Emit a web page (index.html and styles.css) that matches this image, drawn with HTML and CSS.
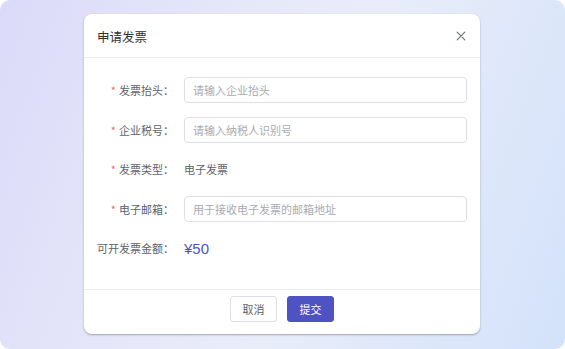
FILE: index.html
```html
<!DOCTYPE html>
<html lang="zh-CN">
<head>
<meta charset="utf-8">
<title>申请发票</title>
<link rel="stylesheet" href="styles.css">
</head>
<body>
<div class="page">
  <div class="dialog">
    <div class="dialog-header">
      <span class="dialog-title">申请发票</span>
      <span class="close" aria-label="关闭">
        <svg width="10" height="10" viewBox="0 0 10 10"><path d="M1.2 1.2 L8.8 8.8 M8.8 1.2 L1.2 8.8" stroke="#6b6f78" stroke-width="1.1" fill="none" stroke-linecap="round"/></svg>
      </span>
    </div>
    <div class="dialog-body">
      <div class="form-row">
        <label class="form-label"><span class="req">*</span>发票抬头：</label>
        <div class="form-control"><input class="input" type="text" placeholder="请输入企业抬头"></div>
      </div>
      <div class="form-row">
        <label class="form-label"><span class="req">*</span>企业税号：</label>
        <div class="form-control"><input class="input" type="text" placeholder="请输入纳税人识别号"></div>
      </div>
      <div class="form-row">
        <label class="form-label"><span class="req">*</span>发票类型：</label>
        <div class="form-control"><span class="text-value">电子发票</span></div>
      </div>
      <div class="form-row">
        <label class="form-label"><span class="req">*</span>电子邮箱：</label>
        <div class="form-control"><input class="input" type="text" placeholder="用于接收电子发票的邮箱地址"></div>
      </div>
      <div class="form-row">
        <label class="form-label">可开发票金额：</label>
        <div class="form-control"><span class="amount">¥50</span></div>
      </div>
    </div>
    <div class="dialog-footer">
      <button class="btn btn-default">取消</button>
      <button class="btn btn-primary">提交</button>
    </div>
  </div>
</div>
</body>
</html>
```
FILE: styles.css
```css
html, body {
  margin: 0;
  padding: 0;
  background: #ffffff;
}
body {
  font-family: "Noto Sans CJK SC", "Noto Sans", sans-serif;
  width: 565px;
  height: 349px;
  overflow: hidden;
}
.page {
  width: 565px;
  height: 349px;
  box-sizing: border-box;
  border-radius: 10px;
  background: linear-gradient(110deg, #dbdaf9 0%, #e6e7f9 35%, #e9edf9 55%, #d3e2fa 100%);
  padding-top: 14px;
  display: flex;
  justify-content: center;
  align-items: flex-start;
}
.dialog {
  width: 396px;
  height: 320px;
  margin-left: -1px;
  background: #ffffff;
  border-radius: 8px;
  box-shadow: 0 1px 2px rgba(80, 80, 90, 0.45);
  display: flex;
  flex-direction: column;
  box-sizing: border-box;
}
.dialog-header {
  height: 44px;
  box-sizing: border-box;
  border-bottom: 1px solid #ececf0;
  display: flex;
  align-items: center;
  justify-content: space-between;
  padding: 1px 14px 0 13px;
}
.dialog-title {
  font-size: 12.5px;
  color: #303133;
}
.close {
  display: flex;
  width: 10px;
  height: 10px;
}
.dialog-body {
  flex: 1;
  padding: 19px 13px 0 13px;
  display: flex;
  flex-direction: column;
}
.form-row {
  display: flex;
  align-items: center;
  height: 26px;
  margin-bottom: 13.6px;
}
.form-label {
  width: 87px;
  flex: none;
  text-align: right;
  padding-right: 10px;
  box-sizing: border-box;
  font-size: 11px;
  color: #606266;
  white-space: nowrap;
}
.req {
  color: #f56c6c;
  margin-right: 3px;
}
.form-control {
  flex: 1;
  display: flex;
  align-items: center;
}
.input {
  width: 283px;
  height: 26px;
  box-sizing: border-box;
  border: 1px solid #dcdfe6;
  border-radius: 4px;
  padding: 0 8px;
  font-family: inherit;
  font-size: 11px;
  color: #606266;
  outline: none;
  background: #fff;
}
.input::placeholder {
  color: #a8abb2;
}
.text-value {
  font-size: 11px;
  color: #606266;
}
.amount {
  font-family: "Liberation Sans", "Noto Sans", sans-serif;
  font-size: 15px;
  color: #4f52c3;
}
.dialog-footer {
  height: 45px;
  box-sizing: border-box;
  border-top: 1px solid #ececf0;
  display: flex;
  justify-content: center;
  align-items: flex-start;
  padding-top: 6px;
  gap: 10px;
}
.btn {
  width: 47px;
  height: 26px;
  box-sizing: border-box;
  border-radius: 3px;
  font-family: inherit;
  font-size: 11px;
  padding: 0;
  cursor: pointer;
}
.btn-default {
  background: #fff;
  border: 1px solid #dcdfe6;
  color: #606266;
}
.btn-primary {
  background: #4f52c3;
  border: 1px solid #4f52c3;
  color: #fff;
}
```
